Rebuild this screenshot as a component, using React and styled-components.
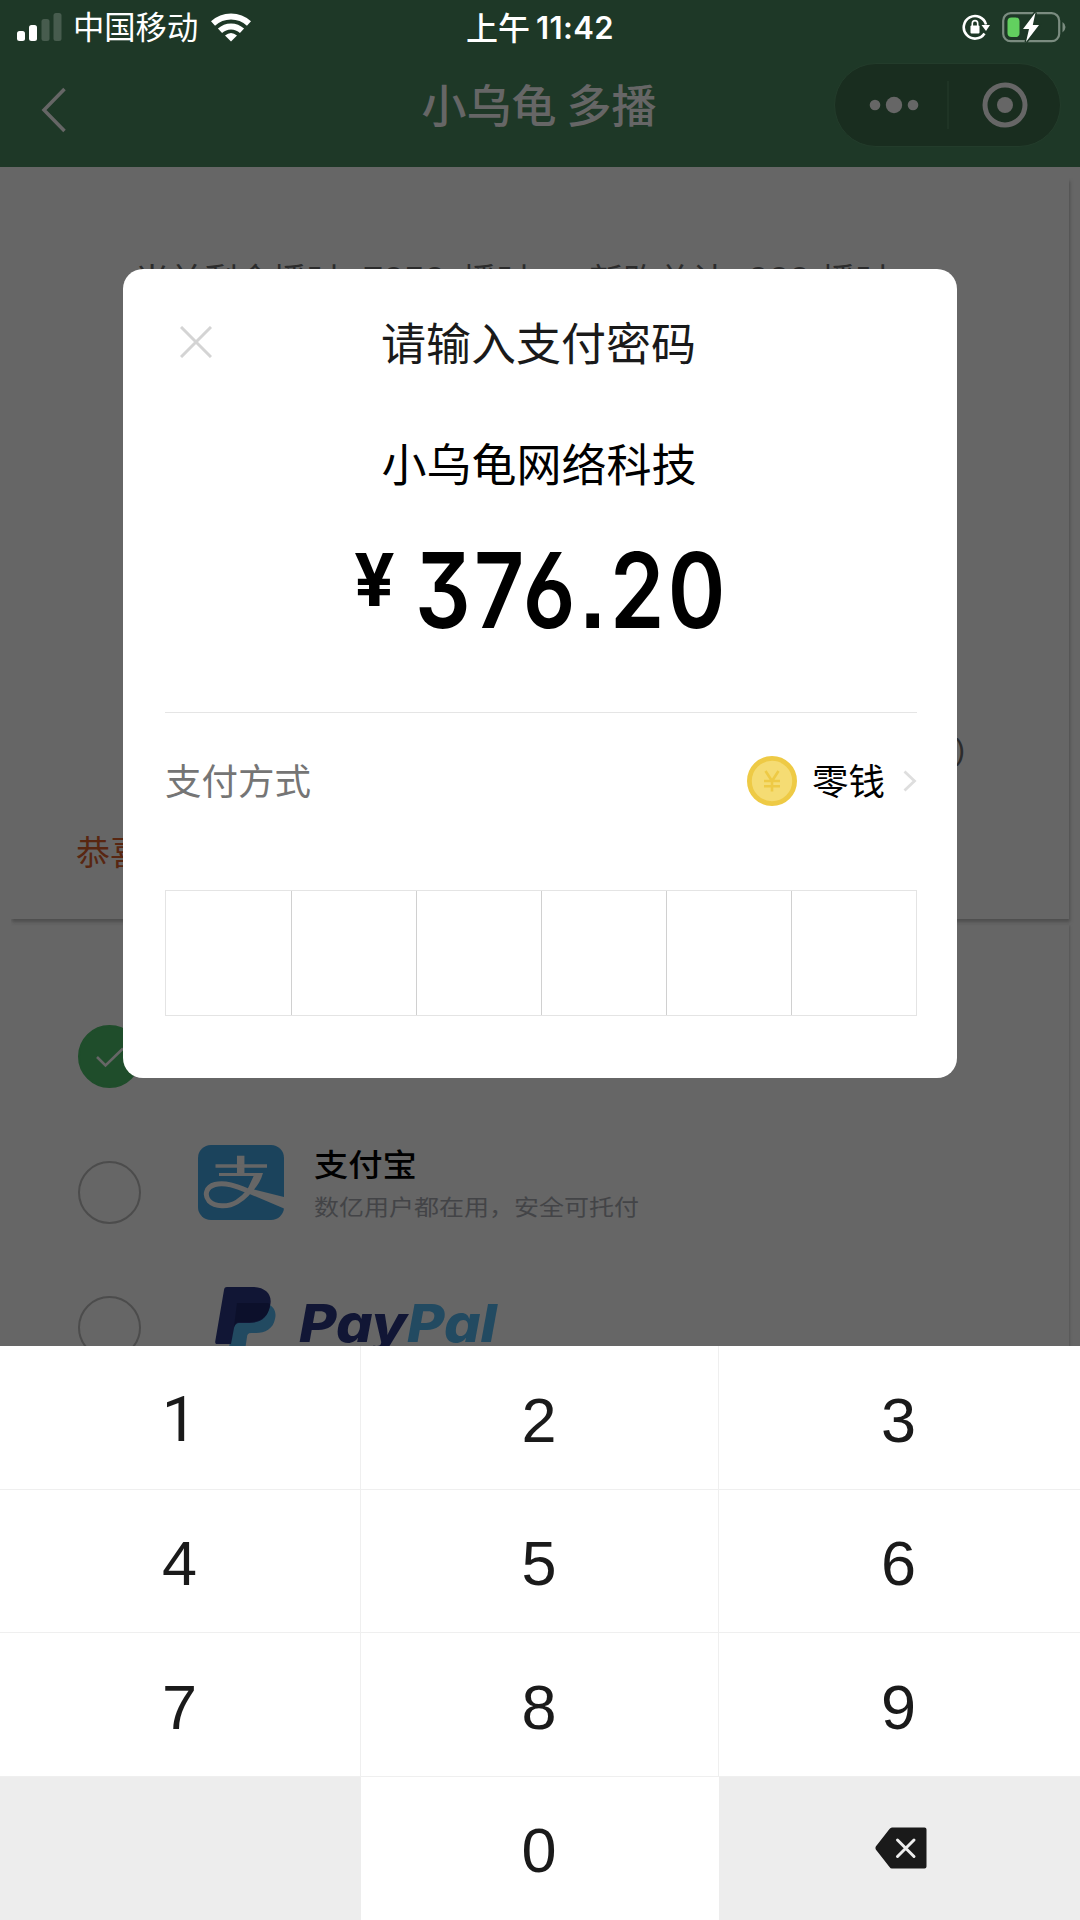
import React, { useState } from "react";
import styled, { createGlobalStyle } from "styled-components";

const KEYS = ["1", "2", "3", "4", "5", "6", "7", "8", "9"];
const CODE_LENGTH = 6;

const SignalIcon = () => (
  <svg width="46" height="30" viewBox="0 0 46 30">
    <rect x="0" y="19" width="8" height="10" rx="2.5" fill="#fff" />
    <rect x="12" y="13" width="8" height="16" rx="2.5" fill="#fff" />
    <rect x="24.500" y="7" width="8" height="22" rx="2.5" fill="#475c4e" />
    <rect x="36.500" y="1" width="8" height="28" rx="2.5" fill="#475c4e" />
  </svg>
);

const WifiIcon = () => (
  <svg width="40" height="30" viewBox="0 0 40 30">
    <g fill="none" stroke="#fff" strokeWidth="6">
      <path d="M2 11.500 A26.500 26.500 0 0 1 38 11.500" />
      <path d="M9 18.800 A16 16 0 0 1 31 18.800" />
    </g>
    <path d="M14 23.500 Q20 18.500 26 23.500 L20 29.500 Z" fill="#fff" />
  </svg>
);

const RotationLockIcon = () => (
  <svg width="28" height="28" viewBox="0 0 28 28">
    <path
      d="M22.500 20.500 A11.300 11.300 0 1 1 24 11.500"
      fill="none"
      stroke="#fff"
      strokeWidth="2.6"
    />
    <path d="M19.500 12 L28 12 L24 18 Z" fill="#fff" />
    <rect x="8.500" y="12.500" width="9" height="8" rx="1" fill="#fff" />
    <path
      d="M10.300 13 V10.500 a2.700 2.900 0 0 1 5.400 0 V13"
      fill="none"
      stroke="#fff"
      strokeWidth="1.6"
    />
  </svg>
);

const BatteryIcon = () => (
  <svg width="64" height="32" viewBox="0 0 64 32">
    <rect
      x="1.200"
      y="2.200"
      width="56"
      height="28"
      rx="7.500"
      fill="none"
      stroke="#7b8c80"
      strokeWidth="2.2"
    />
    <path d="M60.500 11 Q63.500 13 63.500 16 Q63.500 19 60.500 21.500 Z" fill="#7b8c80" />
    <rect x="5.500" y="6.500" width="12" height="19.500" rx="4" fill="#62d05f" />
    <path
      d="M33.500 1.500 L21 18 H27 L24 31 L37 14 H30.800 Z"
      fill="#fff"
      stroke="#1e3827"
      strokeWidth="3"
      paintOrder="stroke"
    />
  </svg>
);

const AlipayLogo = () => (
  <svg width="86" height="75" viewBox="0 0 86 75">
    <rect width="86" height="75" rx="13" fill="#1b435c" />
    <g fill="none" stroke="#666">
      <path d="M42.700 10.700 V29" strokeWidth="7.500" />
      <path d="M17.500 21 H69" strokeWidth="3.400" />
      <path d="M21 29.400 H62" strokeWidth="3" />
      <path
        d="M60.500 29 C57 40 50 50 39 57 C30 62.500 17 62 11 56 C6 50 8 42 17 39.500 C27 37 38 41 50 46"
        strokeWidth="5"
      />
    </g>
    <path
      d="M57 28 H65 C63 35 60 40 56 44.500 L86 52 V63.500 L48 47.500 Z"
      fill="#666"
    />
  </svg>
);

const PaypalMark = () => (
  <svg width="64" height="72" viewBox="0 0 64 72">
    <path
      d="M23 16 H50 C58 18 62 24 60 32 C58 42 50 46 41 46 H36 C33 46 32 48 32 50 L29 70 H12 Z"
      fill="#224a61"
    />
    <path
      d="M12 0 H37 C51 0 58 8 55 19 C53 30 46 36 34 36 H25 C21 36 20 38 19 41 L16 57 H2 C0.500 57 0 56 0.300 54 L9 3 C9.300 1 10 0 12 0 Z"
      fill="#111635"
    />
    <path
      d="M22 16 H50 C53 16 54 16 55 17 C54 29 46 35 34 35 H25 C21 35 20 37 19 40 Z"
      fill="#0c102b"
    />
  </svg>
);

const CoinIcon = () => (
  <svg width="50" height="50" viewBox="0 0 50 50">
    <circle cx="25" cy="25" r="22.600" fill="#f5dc73" stroke="#eeca45" strokeWidth="4.800" />
    <path
      d="M18.500 15 L25 25 L31.500 15 M17 25 H33 M17 30.200 H33 M25 25 V35.500"
      fill="none"
      stroke="#eeca45"
      strokeWidth="2.600"
    />
  </svg>
);

const DeleteIcon = () => (
  <svg width="52" height="42" viewBox="0 0 52 42">
    <path
      d="M17 0.500 H49.500 Q51.500 0.500 51.500 2.500 V39.500 Q51.500 41.500 49.500 41.500 H17 Q15.500 41.500 14.500 40 L0.800 22.500 Q0 21 0.800 19.500 L14.500 2 Q15.500 0.500 17 0.500 Z"
      fill="#1a1a1a"
    />
    <path
      d="M22.500 13 L39 29.500 M39 13 L22.500 29.500"
      stroke="#ededed"
      strokeWidth="3"
      strokeLinecap="round"
    />
  </svg>
);

const App = () => {
  const [code, setCode] = useState("");

  const handleKey = (key) => {
    if (code.length < CODE_LENGTH) {
      setCode(code + key);
    }
  };

  const handleDelete = () => {
    setCode(code.slice(0, -1));
  };

  const renderHeader = () => {
    return (
      <Header>
        <StatusBar>
          <StatusLeft>
            <SignalIcon />
            <Carrier>中国移动</Carrier>
            <WifiIcon />
          </StatusLeft>
          <Clock>
            上午<b>11:42</b>
          </Clock>
          <StatusRight>
            <RotationLockIcon />
            <BatteryIcon />
          </StatusRight>
        </StatusBar>
        <NavBar>
          <BackButton>
            <svg width="26" height="46" viewBox="0 0 26 46">
              <path d="M23.500 2 L3 23 L23.500 44" fill="none" stroke="#666" strokeWidth="3.500" />
            </svg>
          </BackButton>
          <NavTitle>小乌龟 多播</NavTitle>
          <Capsule>
            <svg width="50" height="18" viewBox="0 0 50 18">
              <circle cx="6" cy="9" r="5.300" fill="#666" />
              <circle cx="25" cy="9" r="8.200" fill="#666" />
              <circle cx="44" cy="9" r="5.300" fill="#666" />
            </svg>
            <CapsuleLine />
            <svg width="46" height="46" viewBox="0 0 46 46">
              <circle cx="23" cy="23" r="20" fill="none" stroke="#666" strokeWidth="5" />
              <circle cx="23" cy="23" r="8" fill="#666" />
            </svg>
          </Capsule>
        </NavBar>
      </Header>
    );
  };

  const renderPage = () => {
    return (
      <Page>
        <SummaryCard>
          <Balance>
            <span>当前剩余播时</span>
            <b>7050</b>
            <span>播时，</span>
            <span>新购总计</span>
            <b>900</b>
            <span>播时</span>
          </Balance>
          <Unit>)</Unit>
          <Congrats>恭喜</Congrats>
        </SummaryCard>
        <PayList>
          <PayOption>
            <Radio $checked>
              <svg width="30" height="22" viewBox="0 0 30 22">
                <path d="M2 11 L10.500 19.500 L28 2.500" fill="none" stroke="#666" strokeWidth="2.600" />
              </svg>
            </Radio>
          </PayOption>
          <PayOption>
            <Radio />
            <AlipayBox>
              <AlipayLogo />
              <div>
                <PayName>支付宝</PayName>
                <PayHint>数亿用户都在用，安全可托付</PayHint>
              </div>
            </AlipayBox>
          </PayOption>
          <PayOption>
            <Radio />
            <PaypalBox>
              <PaypalMark />
              <PaypalWord>
                Pay<span>Pal</span>
              </PaypalWord>
            </PaypalBox>
          </PayOption>
        </PayList>
      </Page>
    );
  };

  const renderDialog = () => {
    return (
      <Dialog>
        <DialogHead>
          <svg width="32" height="32" viewBox="0 0 32 32">
            <path d="M1 1 L31 31 M31 1 L1 31" stroke="#d4d4d4" strokeWidth="3" />
          </svg>
          <DialogTitle>请输入支付密码</DialogTitle>
        </DialogHead>
        <Merchant>小乌龟网络科技</Merchant>
        <Amount>
          <Yen>¥</Yen>
          <Price>376.20</Price>
        </Amount>
        <Method>
          <MethodLabel>支付方式</MethodLabel>
          <CoinIcon />
          <MethodName>零钱</MethodName>
          <svg width="14" height="22" viewBox="0 0 14 22">
            <path d="M1.500 1.500 L11.500 11 L1.500 20.500" fill="none" stroke="#dedede" strokeWidth="2.800" />
          </svg>
        </Method>
        <CodeBoxes>
          {Array.from({ length: CODE_LENGTH }).map((_, i) => (
            <CodeBox key={i}>{i < code.length && <Dot />}</CodeBox>
          ))}
        </CodeBoxes>
      </Dialog>
    );
  };

  return (
    <Screen>
      <GlobalStyle />
      {renderHeader()}
      {renderPage()}
      <Keypad>
        {KEYS.map((key) => (
          <Key key={key} onClick={() => handleKey(key)}>
            {key}
          </Key>
        ))}
        <Key $grey />
        <Key onClick={() => handleKey("0")}>0</Key>
        <Key $grey onClick={() => handleDelete()}>
          <DeleteIcon />
        </Key>
      </Keypad>
      {renderDialog()}
    </Screen>
  );
};

export default App;

// STYLED CSS

const GlobalStyle = createGlobalStyle`
  * {
    box-sizing: border-box;
  }
  body {
    margin: 0;
    font-family: "Liberation Sans", "Noto Sans CJK SC", sans-serif;
  }
  svg {
    display: block;
    flex: none;
  }
`;

const Screen = styled.div`
  position: relative;
  display: flex;
  flex-direction: column;
  width: 1080px;
  height: 1920px;
  overflow: hidden;
  background: #666;
`;

const Header = styled.div`
  height: 167px;
  flex: none;
  background: #1e3827;
`;

const StatusBar = styled.div`
  display: grid;
  grid-template-columns: 1fr auto 1fr;
  align-items: center;
  height: 52px;
  padding: 0 14px 0 17px;
  color: #fff;
`;

const StatusLeft = styled.div`
  display: flex;
  align-items: center;
`;

const Carrier = styled.span`
  margin: 0 13px 0 10px;
  padding-bottom: 3px;
  font-family: "Noto Sans CJK SC", sans-serif;
  font-size: 31.3px;
  line-height: 49px;
`;

const Clock = styled.div`
  display: flex;
  align-items: center;
  gap: 6px;
  padding: 0 3px 2px 0;
  font-family: "Noto Sans CJK SC", sans-serif;
  font-size: 32px;
  font-weight: 500;
  line-height: 49px;

  b {
    padding-top: 3px;
    font-family: Inter, sans-serif;
    font-size: 31px;
    font-weight: 600;
    letter-spacing: 0.4px;
  }
`;

const StatusRight = styled.div`
  display: flex;
  align-items: center;
  justify-content: flex-end;
  gap: 12px;
`;

const NavBar = styled.div`
  display: grid;
  grid-template-columns: 227px 1fr 227px;
  align-items: center;
  height: 105px;
  padding: 0 19px 0 41px;
`;

const BackButton = styled.div`
  padding-top: 10px;
`;

const NavTitle = styled.div`
  padding: 0 24px 2px 0;
  text-align: center;
  font-family: "Noto Sans CJK SC", sans-serif;
  font-size: 45px;
  font-weight: 500;
  color: #666;
`;

const Capsule = styled.div`
  display: flex;
  align-items: center;
  justify-content: space-between;
  height: 84px;
  padding: 0 32px 0 34px;
  border: 1px solid #233c2b;
  border-radius: 42px;
  background: #192d1f;
`;

const CapsuleLine = styled.div`
  width: 2px;
  height: 48px;
  margin-right: 5px;
  background: #1f3425;
`;

const Page = styled.div`
  flex: 1;
  overflow: hidden;
  padding: 11px 11px 0 11px;
`;

const SummaryCard = styled.div`
  display: flex;
  flex-direction: column;
  height: 741px;
  padding: 74px 62px 0 65px;
  box-shadow: 1px 3px 3px 0 #4e4e4e;
  clip-path: inset(0 -6px -8px 0);
`;

const Balance = styled.div`
  display: flex;
  align-items: baseline;
  height: 52px;
  padding-left: 59px;
  font-family: "Noto Sans CJK SC", sans-serif;
  font-size: 34.3px;
  line-height: 52px;
  color: #2c2c2c;
  white-space: nowrap;

  b {
    margin: 0 17px 0 22px;
    font-family: "Liberation Sans", sans-serif;
    font-size: 37px;
    font-weight: 400;
  }
  span + span {
    margin-left: 24px;
  }
  span + span + b {
    margin-right: 11px;
  }
`;

const Unit = styled.div`
  margin: 426px 42px 0 0;
  text-align: right;
  font-size: 30px;
  line-height: 40px;
  color: #2c2c2c;
`;

const Congrats = styled.div`
  margin-top: 55px;
  font-family: "Noto Sans CJK SC", sans-serif;
  font-size: 34px;
  line-height: 52px;
  color: #582611;
`;

const PayList = styled.div`
  height: 600px;
  margin-top: 6px;
  padding: 64px 67px 0;
  box-shadow: 2px 0 2px -1px #555;
`;

const PayOption = styled.div`
  display: flex;
  align-items: center;
  height: 135.5px;
`;

const Radio = styled.div`
  display: flex;
  align-items: center;
  justify-content: center;
  flex: none;
  width: 63px;
  height: 63px;
  border: 2px solid ${(props) => (props.$checked ? "#1f4d2b" : "#4c4c4c")};
  border-radius: 50%;
  background: ${(props) => (props.$checked ? "#1f4d2b" : "transparent")};
`;

const AlipayBox = styled.div`
  display: flex;
  gap: 30px;
  height: 94px;
  margin-left: 57px;
  font-family: "Noto Sans CJK SC", sans-serif;
`;

const PayName = styled.div`
  font-size: 34.3px;
  font-weight: 500;
  line-height: 35px;
  color: #000;
  transform: scaleY(0.9);
`;

const PayHint = styled.div`
  margin-top: 8px;
  font-size: 25px;
  line-height: 34px;
  color: #434447;
  transform: scaleY(0.88);
`;

const PaypalBox = styled.div`
  display: flex;
  gap: 20px;
  height: 82px;
  margin-left: 74px;
`;

const PaypalWord = styled.div`
  margin-top: 11px;
  font-family: Inter, sans-serif;
  font-size: 52px;
  font-style: italic;
  font-weight: 800;
  line-height: 52px;
  font-feature-settings: "cv11";
  color: #111635;
  transform: scaleX(1.105);
  transform-origin: 0 50%;

  span {
    color: #224a61;
  }
`;

const Keypad = styled.div`
  display: grid;
  grid-template-columns: 361px 358px 361px;
  grid-template-rows: repeat(4, 1fr);
  height: 574px;
  flex: none;
  background: #fff;
`;

const Key = styled.div`
  display: flex;
  align-items: center;
  justify-content: center;
  padding: ${(props) => (props.$grey ? "0 0 0 2px" : "4px 2px 0 0")};
  font-family: "Liberation Sans", sans-serif;
  font-size: 63px;
  color: #1a1a1a;
  cursor: pointer;
  background: ${(props) => (props.$grey ? "#ededed" : "#fff")};
  box-shadow: inset -1px -1px 0 ${(props) => (props.$grey ? "#ededed" : "#efefef")};

  &:nth-child(3n) {
    box-shadow: inset 0 -1px 0 ${(props) => (props.$grey ? "#ededed" : "#efefef")};
  }
  &:nth-child(11) {
    box-shadow: none;
  }

  // plain "1" without a foot
  &:first-child {
    font-family: Roboto, sans-serif;
  }
`;

const Dialog = styled.div`
  position: absolute;
  top: 269px;
  left: 123px;
  display: flex;
  flex-direction: column;
  width: 834px;
  height: 809px;
  padding: 0 40px 0 42px;
  border-radius: 20px;
  background: #fff;
  font-family: "Noto Sans CJK SC", sans-serif;
`;

const DialogHead = styled.div`
  display: grid;
  grid-template-columns: 32px 1fr 32px;
  align-items: center;
  height: 60px;
  margin: 43px 15px 0 15px;
`;

const DialogTitle = styled.div`
  padding: 0 5px 1px 0;
  text-align: center;
  font-size: 45px;
  line-height: 59px;
  color: #1a1a1a;
`;

const Merchant = styled.div`
  height: 60px;
  margin-top: 61px;
  padding-right: 4px;
  text-align: center;
  font-size: 45px;
  line-height: 59px;
  color: #000;
`;

const Amount = styled.div`
  display: flex;
  align-items: flex-start;
  height: 220px;
  padding-left: 189px;
  border-bottom: 1px solid #e5e5e5;
  font-family: Inter, sans-serif;
  font-weight: 600;
  color: #000;
`;

const Yen = styled.div`
  width: 61px;
  margin-top: 49px;
  font-size: 73px;
  font-weight: 700;
  line-height: 75px;
  transform: scaleX(0.98);
  transform-origin: 0 50%;
`;

const Price = styled.div`
  margin-top: 45px;
  font-size: 104px;
  line-height: 105px;
  letter-spacing: 4px;
  font-feature-settings: "cv09", "cv03", "ss01", "ss07";
  transform: scaleX(0.84);
  transform-origin: 0 50%;
`;

const Method = styled.div`
  display: flex;
  align-items: center;
  height: 136px;
  font-size: 36.5px;
`;

const MethodLabel = styled.div`
  flex: 1;
  padding-bottom: 4px;
  color: #757575;
`;

const MethodName = styled.div`
  margin: 0 18px 0 15px;
  padding-bottom: 4px;
  color: #000;
`;

const CodeBoxes = styled.div`
  display: grid;
  grid-template-columns: repeat(6, 1fr);
  height: 126px;
  margin-top: 41px;
  border: 1px solid #e4e4e4;
`;

const CodeBox = styled.div`
  display: flex;
  align-items: center;
  justify-content: center;

  & + & {
    border-left: 1px solid #d0d0d0;
  }
`;

const Dot = styled.div`
  width: 24px;
  height: 24px;
  border-radius: 50%;
  background: #000;
`;
